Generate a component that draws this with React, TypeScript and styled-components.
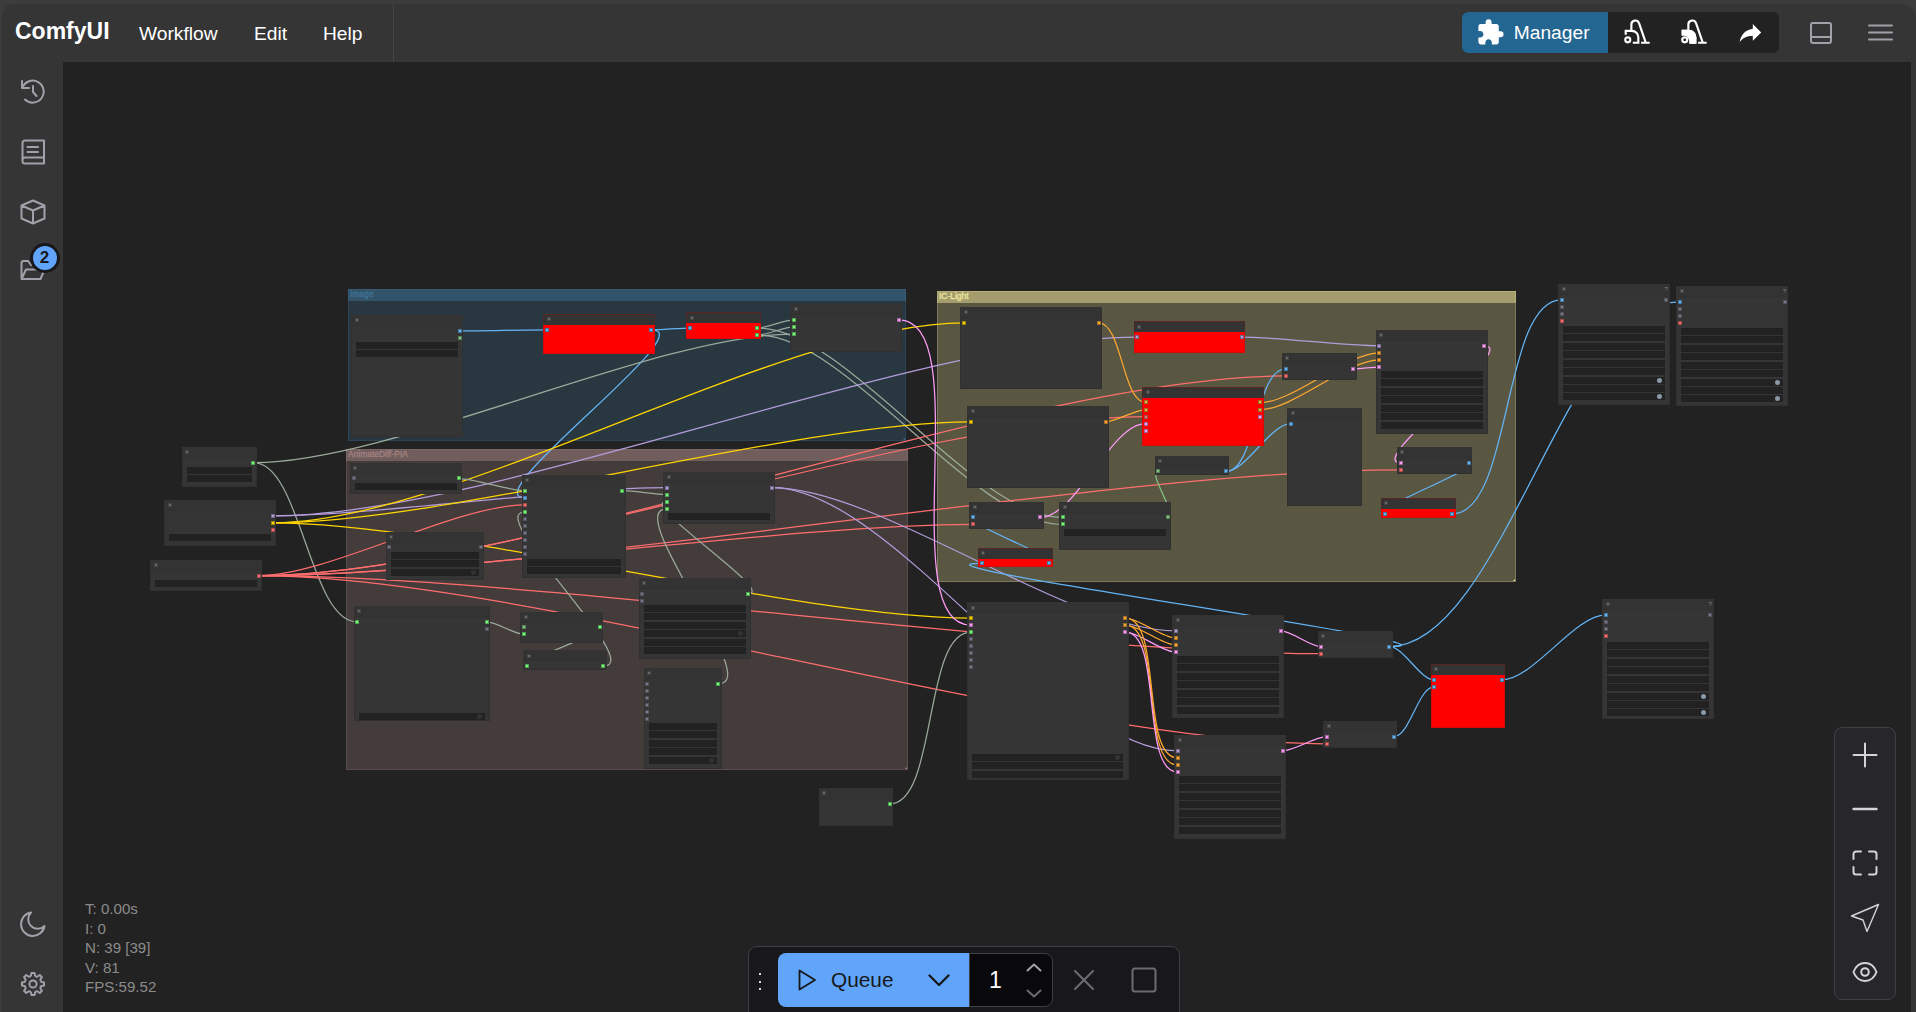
import React from "react";
import styled, { createGlobalStyle } from "styled-components";

const Global = createGlobalStyle`
  * { box-sizing: border-box; }
  body { margin: 0; background: #222; overflow: hidden; }
  button { all: unset; box-sizing: border-box; }
`;

/* ---------- colours of slot types ---------- */
const C: Record<string, string> = {
  b: "#64b5f6", y: "#ffd500", p: "#b39ddb", r: "#ff6e6e", k: "#ff9cf9",
  o: "#ffa931", g: "#77ff77", d: "#81c784", x: "#777788", s: "#9aaa9a",
};

/* ---------- graph data ---------- */
type GNode = {
  id: string; box: [number, number, number, number];
  i?: string; o?: string; w?: [number, number]; knobs?: number[]; lit?: boolean; red?: boolean;
};

const nodes: GNode[] = [
  { id: "load", box: [351.3, 315.3, 463.2, 437.3], o: "bd", w: [342, 2] },
  { id: "r1", box: [543.3, 314.2, 654.8, 353.7], i: "b", o: "b", red: true },
  { id: "r2", box: [686.2, 312.4, 760.7, 339.3], i: "b", o: "gg", red: true },
  { id: "prep", box: [790.4, 304.3, 902.1, 352.3], i: "ggg", o: "k" },
  { id: "n1", box: [182.1, 447.1, 256.8, 486.9], o: "g", w: [467, 2] },
  { id: "n2", box: [164.2, 500.2, 275.9, 545.7], o: "pyr", w: [534, 1] },
  { id: "n3", box: [150.2, 560.1, 261.9, 591.4], o: "r", w: [580, 1] },
  { id: "n4", box: [350, 462.9, 461.8, 494], i: "x", o: "g", w: [483, 1] },
  { id: "n5", box: [385.5, 531.9, 483.8, 579.6], i: "x", o: "x", w: [552, 3], knobs: [2] },
  { id: "n6", box: [353.6, 606.2, 490, 721], i: "g", o: "gx", w: [713, 1], knobs: [0] },
  { id: "n7", box: [521.8, 475.1, 625.8, 578.4], i: "gbrgxxxxxx", o: "g", w: [559, 2] },
  { id: "n8", box: [663.3, 472, 774.9, 523.8], i: "pggg", o: "p", w: [513, 1] },
  { id: "n10", box: [520.2, 611.5, 603.3, 642.5], i: "dg", o: "g" },
  { id: "n11", box: [523.4, 650.4, 606.8, 670], i: "g", o: "g" },
  { id: "n9", box: [638.5, 578, 751, 658.6], i: "xx", o: "g", w: [605, 6], knobs: [3] },
  { id: "n12", box: [643.9, 668.2, 721.8, 769.4], i: "xxxxxx", o: "g", w: [723, 5], knobs: [4] },
  { id: "n13", box: [818.8, 788.2, 893.1, 826], o: "g" },
  { id: "n14", box: [960.2, 307.2, 1101.9, 388.7], i: "y", o: "o" },
  { id: "n15", box: [967.3, 406.2, 1109, 487.7], i: "y", o: "o" },
  { id: "r3", box: [1133.5, 321.4, 1245, 352.8], i: "p", o: "p", red: true },
  { id: "n16", box: [1154.8, 455.8, 1229.2, 475.5], i: "d", o: "b" },
  { id: "r4", box: [1142.3, 386.9, 1263.8, 446], i: "oorkk", o: "ook", red: true },
  { id: "n17", box: [969.2, 501.8, 1043.7, 528.7], i: "br", o: "k" },
  { id: "n18", box: [1059.2, 501.8, 1170.9, 549.6], i: "gg", o: "d", w: [529, 1] },
  { id: "r5", box: [978.1, 547.7, 1052.6, 567.4], i: "b", o: "b", red: true },
  { id: "n19", box: [1282.1, 353.2, 1356.7, 380], i: "br", o: "k" },
  { id: "n20", box: [1287.2, 408.1, 1361.9, 505.8], i: "b" },
  { id: "n21", box: [1375.9, 330.2, 1487.7, 433.7], i: "pook", o: "k", w: [371, 7] },
  { id: "n22", box: [1397, 447.1, 1471.8, 473.8], i: "kr", o: "b" },
  { id: "r6", box: [1381, 498.2, 1455.7, 518], i: "b", o: "b", red: true },
  { id: "n23", box: [967.3, 602.4, 1128.6, 779.8], i: "ykgxxxxx", o: "ook", w: [754, 3], knobs: [0] },
  { id: "n24", box: [1172.3, 615.3, 1284, 718], i: "pook", o: "k", w: [656, 7] },
  { id: "n25", box: [1174.2, 735.2, 1285.9, 838.7], i: "pook", o: "k", w: [776, 7] },
  { id: "n26", box: [1317.5, 631, 1392.6, 657.7], i: "kr", o: "b" },
  { id: "n27", box: [1323.2, 721.1, 1397, 748], i: "kr", o: "b" },
  { id: "r7", box: [1430.7, 664.3, 1505.3, 727.8], i: "bb", o: "b", red: true },
  { id: "n28", box: [1558.2, 284.2, 1669.8, 404.6], i: "bxxr", o: "x", w: [326, 9], knobs: [6, 8], lit: true },
  { id: "n29", box: [1676.2, 286.2, 1788, 406], i: "bxxr", o: "x", w: [328, 9], knobs: [6, 8], lit: true },
  { id: "n30", box: [1602.2, 599.2, 1713.8, 719], i: "bxxr", o: "x", w: [642, 9], knobs: [6, 8], lit: true },
];

const links: [string, number, string, number, string][] = [
  ["load", 0, "r1", 0, "b"], ["r1", 0, "r2", 0, "b"], ["r1", 0, "n7", 1, "b"],
  ["r2", 0, "prep", 0, "s"], ["r2", 1, "prep", 1, "s"], ["n1", 0, "prep", 2, "s"],
  ["r2", 0, "n18", 0, "s"], ["r2", 1, "n18", 1, "s"], ["n1", 0, "n6", 0, "s"],
  ["n2", 0, "n8", 0, "p"], ["n2", 0, "r3", 0, "p"],
  ["n2", 1, "n14", 0, "y"], ["n2", 1, "n15", 0, "y"], ["n2", 1, "n23", 0, "y"],
  ["n3", 0, "n7", 2, "r"], ["n3", 0, "r4", 2, "r"], ["n3", 0, "n19", 1, "r"],
  ["n3", 0, "n22", 1, "r"], ["n3", 0, "n17", 1, "r"], ["n3", 0, "n26", 1, "r"], ["n3", 0, "n27", 1, "r"],
  ["n4", 0, "n7", 0, "s"], ["n11", 0, "n7", 3, "s"], ["n10", 0, "n11", 0, "s"], ["n6", 0, "n10", 1, "s"],
  ["n7", 0, "n8", 1, "s"], ["n9", 0, "n8", 2, "s"], ["n12", 0, "n8", 3, "s"],
  ["n8", 0, "n24", 0, "p"], ["n8", 0, "n25", 0, "p"], ["n13", 0, "n23", 2, "s"],
  ["prep", 0, "n23", 1, "k"], ["n14", 0, "r4", 0, "o"], ["n15", 0, "r4", 1, "o"], ["n17", 0, "r4", 3, "k"],
  ["r3", 0, "n21", 0, "p"], ["r4", 0, "n21", 1, "o"], ["r4", 1, "n21", 2, "o"], ["n19", 0, "n21", 3, "k"],
  ["n21", 0, "n22", 0, "k"], ["n22", 0, "r6", 0, "b"], ["r6", 0, "n28", 0, "b"],
  ["n18", 0, "n16", 0, "d"], ["n16", 0, "n19", 0, "b"], ["n16", 0, "n20", 0, "b"],
  ["r5", 0, "n17", 0, "b"], ["n26", 0, "r5", 0, "b"], ["n26", 0, "n29", 0, "b"], ["n26", 0, "r7", 0, "b"],
  ["n27", 0, "r7", 1, "b"], ["r7", 0, "n30", 0, "b"],
  ["n23", 0, "n24", 1, "o"], ["n23", 1, "n24", 2, "o"], ["n23", 2, "n24", 3, "k"],
  ["n23", 0, "n25", 1, "o"], ["n23", 1, "n25", 2, "o"], ["n23", 2, "n25", 3, "k"],
  ["n24", 0, "n26", 0, "k"], ["n25", 0, "n27", 0, "k"],
];

const groups = [
  { title: "Image", box: [348, 289, 906, 441], tint: "63,120,158", text: "#3d7195" },
  { title: "AnimateDiff-PIA", box: [346, 449, 908, 770], tint: "170,136,136", text: "#a08080" },
  { title: "IC-Light", box: [937, 291, 1516, 582], tint: "254,242,162", text: "#eae49c" },
];

const SLOT_TOP = 15.6;
const SLOT_GAP = 7.07;
const byId = Object.fromEntries(nodes.map((n) => [n.id, n]));

const linkPath = ([from, fi, to, ti]: (typeof links)[number]) => {
  const a = byId[from].box;
  const b = byId[to].box;
  const x1 = a[2] - 3.2, y1 = a[1] + SLOT_TOP + fi * SLOT_GAP;
  const x2 = b[0] + 3.4, y2 = b[1] + SLOT_TOP + ti * SLOT_GAP;
  const d = Math.hypot(x2 - x1, y2 - y1) * 0.25;
  return `M${x1},${y1}C${x1 + d},${y1} ${x2 - d},${y2} ${x2},${y2}`;
};

/* ---------- shell ---------- */
const Shell = styled.div`
  width: 1916px;
  height: 1012px;
  padding: 4px 0 0 2px;
  background: #3c3c3c;
  font-family: "Liberation Sans", Arial, sans-serif;
  overflow: hidden;
`;
const Window = styled.div`
  display: grid;
  grid-template: 58px 950px / 61px 1848px 5px;
  background: #353535;
  border-radius: 12px 16px 0 0;
`;
const TopBar = styled.header`
  grid-column: 1 / 4;
  display: flex;
  align-items: stretch;
  padding-right: 23px;
  color: #fff;
`;
const Brand = styled.h1`
  margin: 0;
  width: 113px;
  padding-left: 13px;
  font-size: 23px;
  line-height: 54px;
  font-weight: 700;
`;
const MenuItem = styled.button<{ $w: number }>`
  width: ${(p) => p.$w}px;
  padding-left: 24px;
  font-size: 19.2px;
  line-height: 55px;
`;
const Divider = styled.div`
  width: 1px;
  margin-left: 6px;
  background: #444;
`;
const Actions = styled.div`
  display: flex;
  width: 317px;
  height: 41px;
  margin: 8px 0 0 auto;
  border-radius: 6px;
  overflow: hidden;
  background: #222;
`;
const ManagerButton = styled.button`
  display: flex;
  align-items: center;
  gap: 9px;
  width: 146px;
  padding-left: 14px;
  background: #236692;
  font-size: 19.2px;
  line-height: 41px;
`;
const ActionButton = styled.button<{ $w: number }>`
  display: flex;
  align-items: center;
  justify-content: center;
  width: ${(p) => p.$w}px;
`;
const BarIcon = styled.button<{ $ml: number }>`
  display: flex;
  align-items: center;
  margin-left: ${(p) => p.$ml}px;
  color: #a1a1aa;
`;
const SideBar = styled.nav`
  display: flex;
  flex-direction: column;
  align-items: center;
  margin-bottom: -2px;
  color: #a1a1aa;
`;
const SideItem = styled.button<{ $lift?: number }>`
  position: relative;
  display: flex;
  align-items: center;
  justify-content: center;
  width: 60px;
  height: 60px;
  padding-bottom: ${(p) => p.$lift ?? 0}px;
`;
const Spring = styled.div`
  flex: 1;
`;
const Badge = styled.span`
  position: absolute;
  left: 27px;
  top: 1px;
  width: 30px;
  height: 30px;
  border: 3px solid #18181b;
  border-radius: 50%;
  background: #60a5fa;
  color: #18181b;
  font-size: 17px;
  font-weight: 700;
  line-height: 24px;
  text-align: center;
`;

/* ---------- canvas ---------- */
const Canvas = styled.main`
  position: relative;
  background: #222;
  overflow: hidden;
`;
const World = styled.div`
  position: absolute;
  left: -63px;
  top: -62px;
  width: 1916px;
  height: 1012px;
`;
const Group = styled.section<{ $b: number[]; $tint: string; $text: string }>`
  position: absolute;
  left: ${(p) => p.$b[0]}px;
  top: ${(p) => p.$b[1]}px;
  width: ${(p) => p.$b[2] - p.$b[0]}px;
  height: ${(p) => p.$b[3] - p.$b[1]}px;
  border: 1px solid rgba(${(p) => p.$tint}, 0.22);
  background: rgba(${(p) => p.$tint}, 0.25);
  &::after {
    content: "";
    position: absolute;
    right: 0;
    bottom: 0;
    border: 1.5px solid;
    border-color: transparent ${(p) => p.$text} ${(p) => p.$text} transparent;
  }
`;
const GroupTitle = styled.h2<{ $tint: string; $text: string }>`
  margin: -1px;
  height: 12px;
  padding-left: 2px;
  background: rgba(${(p) => p.$tint}, 0.45);
  color: ${(p) => p.$text};
  font-size: 8.45px;
  line-height: 11px;
  font-weight: 400;
  -webkit-text-stroke: 0.35px ${(p) => p.$text};
`;
const Wires = styled.svg`
  position: absolute;
  inset: 0;
`;
const NodeBox = styled.article<{ $b: number[]; $red?: boolean }>`
  position: absolute;
  left: ${(p) => p.$b[0]}px;
  top: ${(p) => p.$b[1]}px;
  width: ${(p) => p.$b[2] - p.$b[0]}px;
  height: ${(p) => p.$b[3] - p.$b[1]}px;
  background: ${(p) => (p.$red ? "#f00" : "#353535")};
  box-shadow: ${(p) => (p.$red ? "inset 0 0 0 1px rgba(120,30,30,.3)" : "inset 0 0 0 1px #303030")};
`;
const NodeTitle = styled.header<{ $red?: boolean }>`
  height: 11px;
  padding: 3.2px 3.4px;
  background: #333;
  border-bottom: ${(p) => (p.$red ? "0" : "1px solid #313131")};
  box-shadow: ${(p) => (p.$red ? "inset 0 1px 0 #5c2424, inset 1px 0 0 #4c2828, inset -1px 0 0 #4c2828" : "none")};
`;
const Fold = styled.i`
  display: block;
  width: 4px;
  height: 4px;
  background: #666;
  border: 0.5px solid #444;
`;
const Help = styled.span`
  position: absolute;
  right: 2px;
  top: 1px;
  color: #8a8a8a;
  font-size: 6px;
  line-height: 8px;
`;
const Slot = styled.i<{ $x: number; $y: number; $c: string }>`
  position: absolute;
  left: ${(p) => p.$x}px;
  top: ${(p) => p.$y}px;
  width: 4px;
  height: 4px;
  background: ${(p) => p.$c};
  border: 1px solid rgba(30, 30, 30, 0.42);
`;
const Widgets = styled.div<{ $top: number }>`
  position: absolute;
  left: 5.2px;
  right: 5.2px;
  top: ${(p) => p.$top}px;
`;
const Widget = styled.div`
  display: flex;
  justify-content: flex-end;
  align-items: center;
  height: 7px;
  margin-bottom: 1.45px;
  padding-right: 3px;
  background: #222;
`;
const Knob = styled.i<{ $lit?: boolean }>`
  width: 5px;
  height: 5px;
  border-radius: 50%;
  background: ${(p) => (p.$lit ? "#8899aa" : "#333")};
`;
const Stats = styled.pre`
  position: absolute;
  left: 22px;
  top: 837px;
  margin: 0;
  color: #8b8b8b;
  font-family: inherit;
  font-size: 15.1px;
  line-height: 19.5px;
`;
const ZoomPanel = styled.aside`
  position: absolute;
  left: 1771px;
  top: 665px;
  width: 62px;
  height: 273px;
  display: flex;
  flex-direction: column;
  border: 1px solid #3f3f46;
  border-radius: 8px;
  background: #27272a;
  color: #d4d4d8;
`;
const ZoomButton = styled.button<{ $lift?: number }>`
  flex: 1;
  display: flex;
  align-items: center;
  justify-content: center;
  padding-bottom: ${(p) => p.$lift ?? 0}px;
`;
const QueueBar = styled.section`
  position: absolute;
  left: 685px;
  top: 884px;
  width: 432px;
  height: 80px;
  display: flex;
  padding: 6px 0 0 29px;
  border: 1px solid #3f3f46;
  border-radius: 9px;
  background: #18181b;
`;
const Grip = styled.div`
  position: absolute;
  left: 10px;
  top: 26px;
  display: grid;
  gap: 5.5px;
`;
const Dot = styled.i`
  width: 2px;
  height: 2px;
  background: #ddd;
`;
const QueueButton = styled.button`
  display: flex;
  align-items: center;
  width: 191px;
  height: 54px;
  padding-left: 20px;
  border-radius: 8px 0 0 8px;
  background: #60a5fa;
  color: #18181b;
  font-size: 20.8px;
`;
const QueueLabel = styled.span`
  width: 111px;
  padding-left: 14px;
`;
const Count = styled.div`
  display: flex;
  align-items: center;
  width: 84px;
  height: 54px;
  padding-left: 19px;
  border: 1px solid #3f3f46;
  border-radius: 0 8px 8px 0;
  background: #09090b;
  color: #fff;
  font-size: 23px;
`;
const Steps = styled.div`
  display: grid;
  gap: 17px;
  margin-left: 24px;
  color: #a1a1aa;
  svg:last-child { color: #6b6b72; }
`;
const BarTool = styled.div<{ $ml: number }>`
  display: flex;
  align-items: center;
  height: 54px;
  margin-left: ${(p) => p.$ml}px;
  color: #6b6b72;
`;

const Line = ({ w = 26, h = w, vb = "0 0 26 26", sw = 2, children }: {
  w?: number; h?: number; vb?: string; sw?: number; children: React.ReactNode;
}) => (
  <svg width={w} height={h} viewBox={vb} fill="none" stroke="currentColor" strokeWidth={sw}
    strokeLinecap="round" strokeLinejoin="round">{children}</svg>
);
const Solid = ({ d }: { d: string }) => (
  <svg width="28.8" height="28.8" viewBox="0 0 24 24" fill="#fff"><path d={d} /></svg>
);
const Vacuum = ({ filled }: { filled?: boolean }) => (
  <svg width="28.8" height="28.8" viewBox="0 0 24 24" fill="none" stroke="#fff" strokeWidth="1.8">
    <circle cx="4.8" cy="18.2" r="2.1" />
    {filled && <path d="M3.1 10.7H8.3C11.3 10.7 13.6 13 13.6 16V20.6H9.4C9.8 16 6.5 13.4 3.1 14Z" fill="#fff" />}
    <path d="M3.1 14V10.7H8.3C11.3 10.7 13.6 13 13.6 16V20.6H9" />
    <path d="M7.8 10.7V5.6A3.3 3.3 0 0 1 14.2 4.3L19.8 20.5M15.9 20.6H23.1" />
  </svg>
);

const gearPath = (() => {
  const pts: string[] = [];
  for (let k = 0; k < 8; k++) {
    const at = (deg: number, r: number) => {
      const t = ((k * 45 + deg) * Math.PI) / 180;
      return `${(13 + r * Math.sin(t)).toFixed(2)} ${(13 - r * Math.cos(t)).toFixed(2)}`;
    };
    pts.push(`${k ? "L" : "M"}${at(-8, 11.2)}L${at(8, 11.2)}L${at(13, 8.8)}Q${at(22.5, 7.6)} ${at(32, 8.8)}`);
  }
  return pts.join("") + "Z";
})();

const NodeView = ({ n }: { n: GNode }) => {
  const w = n.box[2] - n.box[0];
  const sy = (k: number) => SLOT_TOP - 2 + k * SLOT_GAP;
  return (
    <NodeBox $b={n.box} $red={n.red}>
      <NodeTitle $red={n.red}><Fold /></NodeTitle>
      {n.lit && <Help>?</Help>}
      {[...(n.i ?? "")].map((c, k) => <Slot key={"i" + k} $x={1.6} $y={sy(k)} $c={C[c]} />)}
      {[...(n.o ?? "")].map((c, k) => <Slot key={"o" + k} $x={w - 5.3} $y={sy(k)} $c={C[c]} />)}
      {n.w && (
        <Widgets $top={n.w[0] - n.box[1]}>
          {Array.from({ length: n.w[1] }, (_, k) => (
            <Widget key={k}>{n.knobs?.includes(k) && <Knob $lit={n.lit} />}</Widget>
          ))}
        </Widgets>
      )}
    </NodeBox>
  );
};

export default function App() {
  return (
    <Shell>
      <Global />
      <Window>
        <TopBar>
          <Brand>ComfyUI</Brand>
          <MenuItem $w={115}>Workflow</MenuItem>
          <MenuItem $w={69}>Edit</MenuItem>
          <MenuItem $w={88}>Help</MenuItem>
          <Divider />
          <Actions>
            <ManagerButton>
              <Solid d="M20.5,11H19V7C19,5.89 18.1,5 17,5H13V3.5A2.5,2.5 0 0,0 10.5,1A2.5,2.5 0 0,0 8,3.5V5H4A2,2 0 0,0 2,7V10.8H3.5C5,10.8 6.2,12 6.2,13.5C6.2,15 5,16.2 3.5,16.2H2V20A2,2 0 0,0 4,22H7.8V20.5C7.8,19 9,17.8 10.5,17.8C12,17.8 13.2,19 13.2,20.5V22H17A2,2 0 0,0 19,20V16H20.5A2.5,2.5 0 0,0 23,13.5A2.5,2.5 0 0,0 20.5,11Z" />
              Manager
            </ManagerButton>
            <ActionButton $w={57}><Vacuum /></ActionButton>
            <ActionButton $w={57}><Vacuum filled /></ActionButton>
            <ActionButton $w={57}><Solid d="M21,12L14,5V9C7,10 4,15 3,20C5.5,16.5 9,14.9 14,14.9V19L21,12Z" /></ActionButton>
          </Actions>
          <BarIcon $ml={31}>
            <Line w={22} vb="0 0 22 22"><rect x="1" y="1" width="20" height="20" rx="2" /><path d="M1 15H21" /></Line>
          </BarIcon>
          <BarIcon $ml={36}>
            <Line w={25} h={20} vb="0 0 25 20"><path d="M1 2.5H24M1 9.5H24M1 16.5H24" /></Line>
          </BarIcon>
        </TopBar>

        <SideBar>
          <SideItem>
            <Line><path d="M2 2V9H9M2.5 8.5A11 11 0 1 1 5 20.5M13 7V13L16.5 17" /></Line>
          </SideItem>
          <SideItem $lift={1}>
            <Line><path d="M24 1.5H5A2.5 2.5 0 0 0 2.5 4V22A2.5 2.5 0 0 0 5 24.5H24ZM24 18.5H5A2.5 2.5 0 0 0 2.5 21M7.5 8H18M7.5 13H18" /></Line>
          </SideItem>
          <SideItem $lift={1}>
            <Line><path d="M13 1.5L24.5 6.5V19.5L13 24.5L1.5 19.5V6.5ZM1.5 6.5L13 11.5L24.5 6.5M13 11.5V24.5" /></Line>
          </SideItem>
          <SideItem $lift={5}>
            <Line><path d="M1.5 22V5.5A2 2 0 0 1 3.5 4H8L11 8H18A2 2 0 0 1 20 10V12M1.5 22L6 12.5H24.5L20.5 22Z" /></Line>
            <Badge>2</Badge>
          </SideItem>
          <Spring />
          <SideItem>
            <Line><path d="M11 1.5A11.8 11.8 0 1 0 24.5 15A9.3 9.3 0 0 1 11 1.5Z" /></Line>
          </SideItem>
          <SideItem>
            <Line><path d={gearPath} /><circle cx="13" cy="13" r="3.6" /></Line>
          </SideItem>
        </SideBar>

        <Canvas>
          <World>
            {groups.map((g) => (
              <Group key={g.title} $b={g.box} $tint={g.tint} $text={g.text}>
                <GroupTitle $tint={g.tint} $text={g.text}>{g.title}</GroupTitle>
              </Group>
            ))}
            <Wires width="1916" height="1012" fill="none" strokeWidth="1.25">
              {links.map((l, k) => <path key={k} d={linkPath(l)} stroke={C[l[4]]} />)}
            </Wires>
            {nodes.map((n) => <NodeView key={n.id} n={n} />)}
          </World>
          <Stats>{"T: 0.00s\nI: 0\nN: 39 [39]\nV: 81\nFPS:59.52"}</Stats>
          <ZoomPanel>
            <ZoomButton $lift={1}><Line><path d="M13 1.5V24.5M1.5 13H24.5" /></Line></ZoomButton>
            <ZoomButton $lift={1}><Line sw={2.4}><path d="M1.5 13H24.5" /></Line></ZoomButton>
            <ZoomButton $lift={2}><Line><path d="M1.5 9V4A2.5 2.5 0 0 1 4 1.5H9M17 1.5H22A2.5 2.5 0 0 1 24.5 4V9M24.5 17V22A2.5 2.5 0 0 1 22 24.5H17M9 24.5H4A2.5 2.5 0 0 1 1.5 22V17" /></Line></ZoomButton>
            <ZoomButton $lift={1}><Line w={30} vb="0 0 30 30" sw={1.4}><path d="M28.5 1.5L1.5 13L13 17L17 28.5Z" /></Line></ZoomButton>
            <ZoomButton><Line><path d="M1.5 13C6 1 20 1 24.5 13C20 25 6 25 1.5 13Z" /><circle cx="13" cy="13" r="3.8" /></Line></ZoomButton>
          </ZoomPanel>
          <QueueBar>
            <Grip><Dot /><Dot /><Dot /></Grip>
            <QueueButton>
              <Line w={19} h={22} vb="0 0 19 22" sw={1.8}><path d="M1.5 1.5V20.5L17 11Z" /></Line>
              <QueueLabel>Queue</QueueLabel>
              <Line w={22} h={13} vb="0 0 22 13" sw={2.3}><path d="M1.5 1.5L11 11L20.5 1.5" /></Line>
            </QueueButton>
            <Count>
              1
              <Steps>
                <Line w={16} h={9} vb="0 0 16 9"><path d="M1.5 7.5L8 1.5L14.5 7.5" /></Line>
                <Line w={16} h={9} vb="0 0 16 9"><path d="M1.5 1.5L8 7.5L14.5 1.5" /></Line>
              </Steps>
            </Count>
            <BarTool $ml={20}><Line w={22} vb="0 0 22 22"><path d="M2 2L20 20M20 2L2 20" /></Line></BarTool>
            <BarTool $ml={36}><Line w={26}><rect x="1.5" y="1.5" width="23" height="23" rx="2.5" /></Line></BarTool>
          </QueueBar>
        </Canvas>
      </Window>
    </Shell>
  );
}
